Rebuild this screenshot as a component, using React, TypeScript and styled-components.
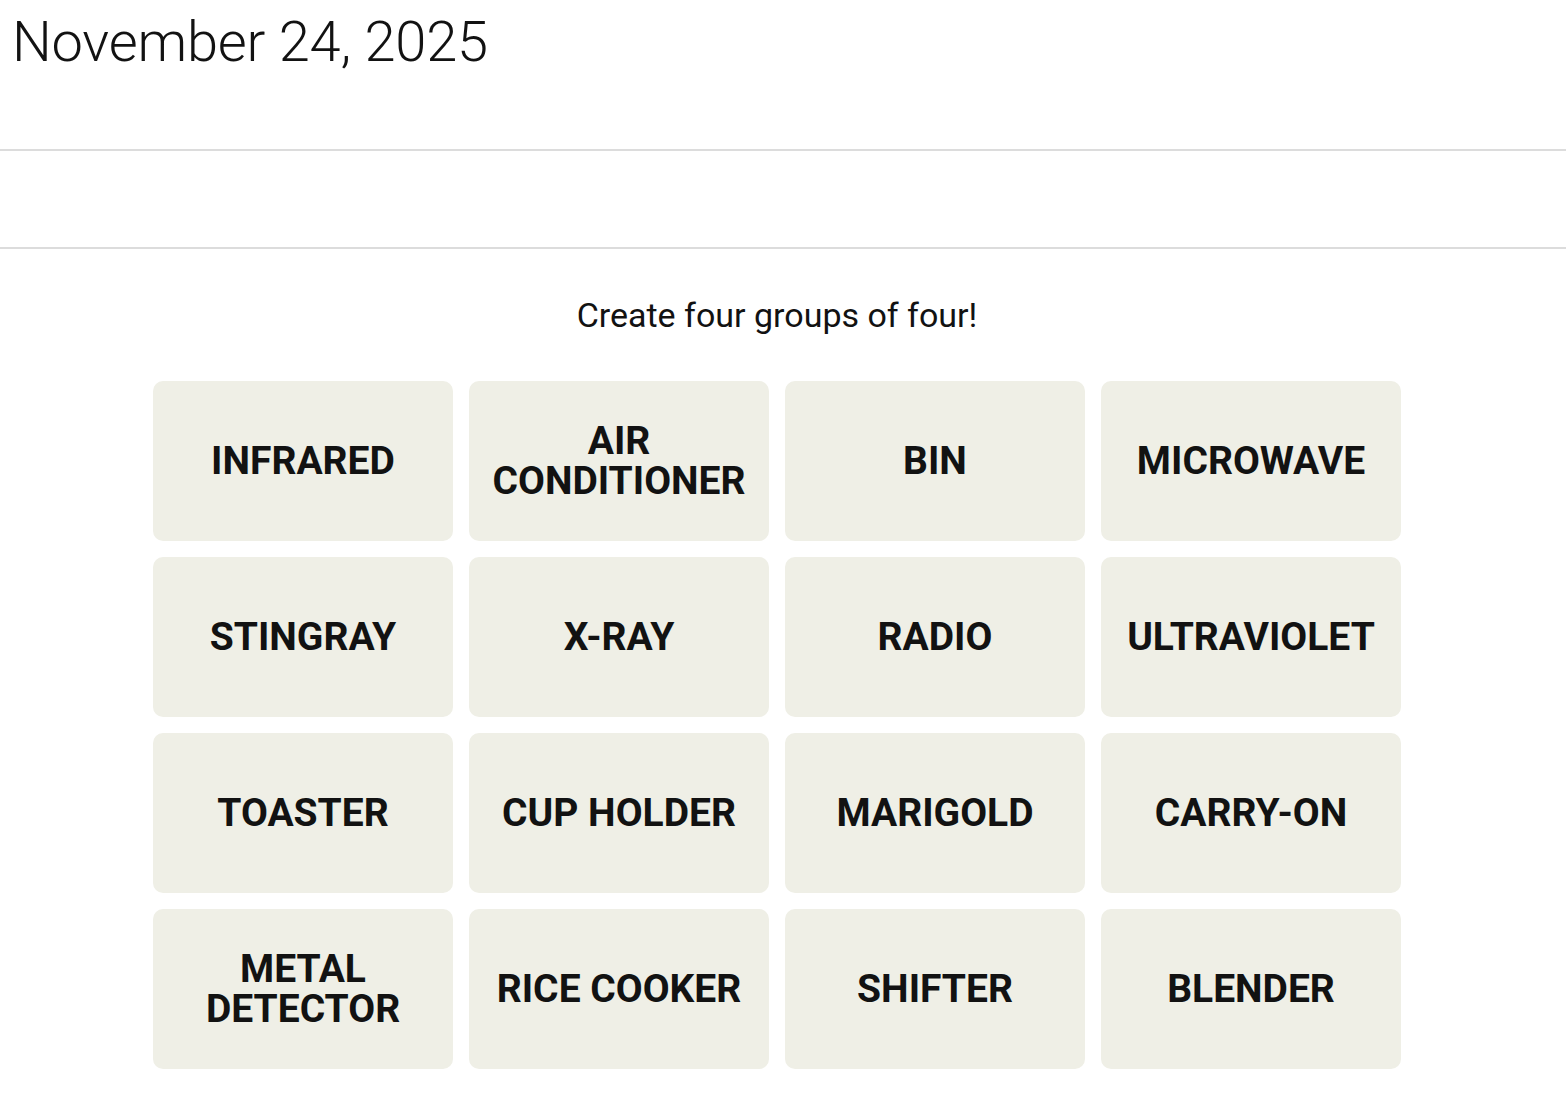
import React from 'react'
import styled, { createGlobalStyle } from 'styled-components'

const GlobalStyle = createGlobalStyle`
  html, body {
    margin: 0;
    padding: 0;
    background: #ffffff;
    color: #121212;
    font-family: Roboto, 'Liberation Sans', sans-serif;
  }
`

const Header = styled.header`
  height: 149px;
  border-bottom: 2px solid #dcdcdc;
`

const DateTitle = styled.h1`
  margin: 0;
  padding: 10px 0 0 12px;
  font-size: 56px;
  font-weight: 300;
  line-height: 64px;
  letter-spacing: -0.2px;
`

const Toolbar = styled.div`
  height: 96px;
  border-bottom: 2px solid #dcdcdc;
`

const Main = styled.main`
  display: flex;
  flex-direction: column;
  align-items: center;
  padding: 0 12px 30px 0;
`

const Prompt = styled.p`
  margin: 46px 0 0;
  font-size: 34px;
  line-height: 40px;
  font-weight: 400;
`

const Board = styled.div`
  margin-top: 46px;
  display: grid;
  grid-template-columns: repeat(4, 300px);
  grid-auto-rows: 160px;
  gap: 16px;
`

const Tile = styled.button`
  border: none;
  border-radius: 10px;
  background: #efefe6;
  color: #121212;
  font-family: Roboto, 'Liberation Sans', sans-serif;
  font-weight: 700;
  font-size: 39px;
  line-height: 40px;
  text-transform: uppercase;
  display: flex;
  align-items: center;
  justify-content: center;
  text-align: center;
  padding: 0 12px;
  cursor: pointer;
`

const words = [
  ['INFRARED', 'AIR CONDITIONER', 'BIN', 'MICROWAVE'],
  ['STINGRAY', 'X-RAY', 'RADIO', 'ULTRAVIOLET'],
  ['TOASTER', 'CUP HOLDER', 'MARIGOLD', 'CARRY-ON'],
  ['METAL DETECTOR', 'RICE COOKER', 'SHIFTER', 'BLENDER'],
]

// long two-word names break onto two lines
const split = ['AIR CONDITIONER', 'METAL DETECTOR']

export default function App() {
  return (
    <>
      <GlobalStyle />
      <Header>
        <DateTitle>November 24, 2025</DateTitle>
      </Header>
      <Toolbar />
      <Main>
        <Prompt>Create four groups of four!</Prompt>
        <Board>
          {words.flat().map((w) => (
            <Tile key={w}>
              {split.includes(w) ? (
                <span>
                  {w.split(' ')[0]}
                  <br />
                  {w.split(' ')[1]}
                </span>
              ) : (
                w
              )}
            </Tile>
          ))}
        </Board>
      </Main>
    </>
  )
}
